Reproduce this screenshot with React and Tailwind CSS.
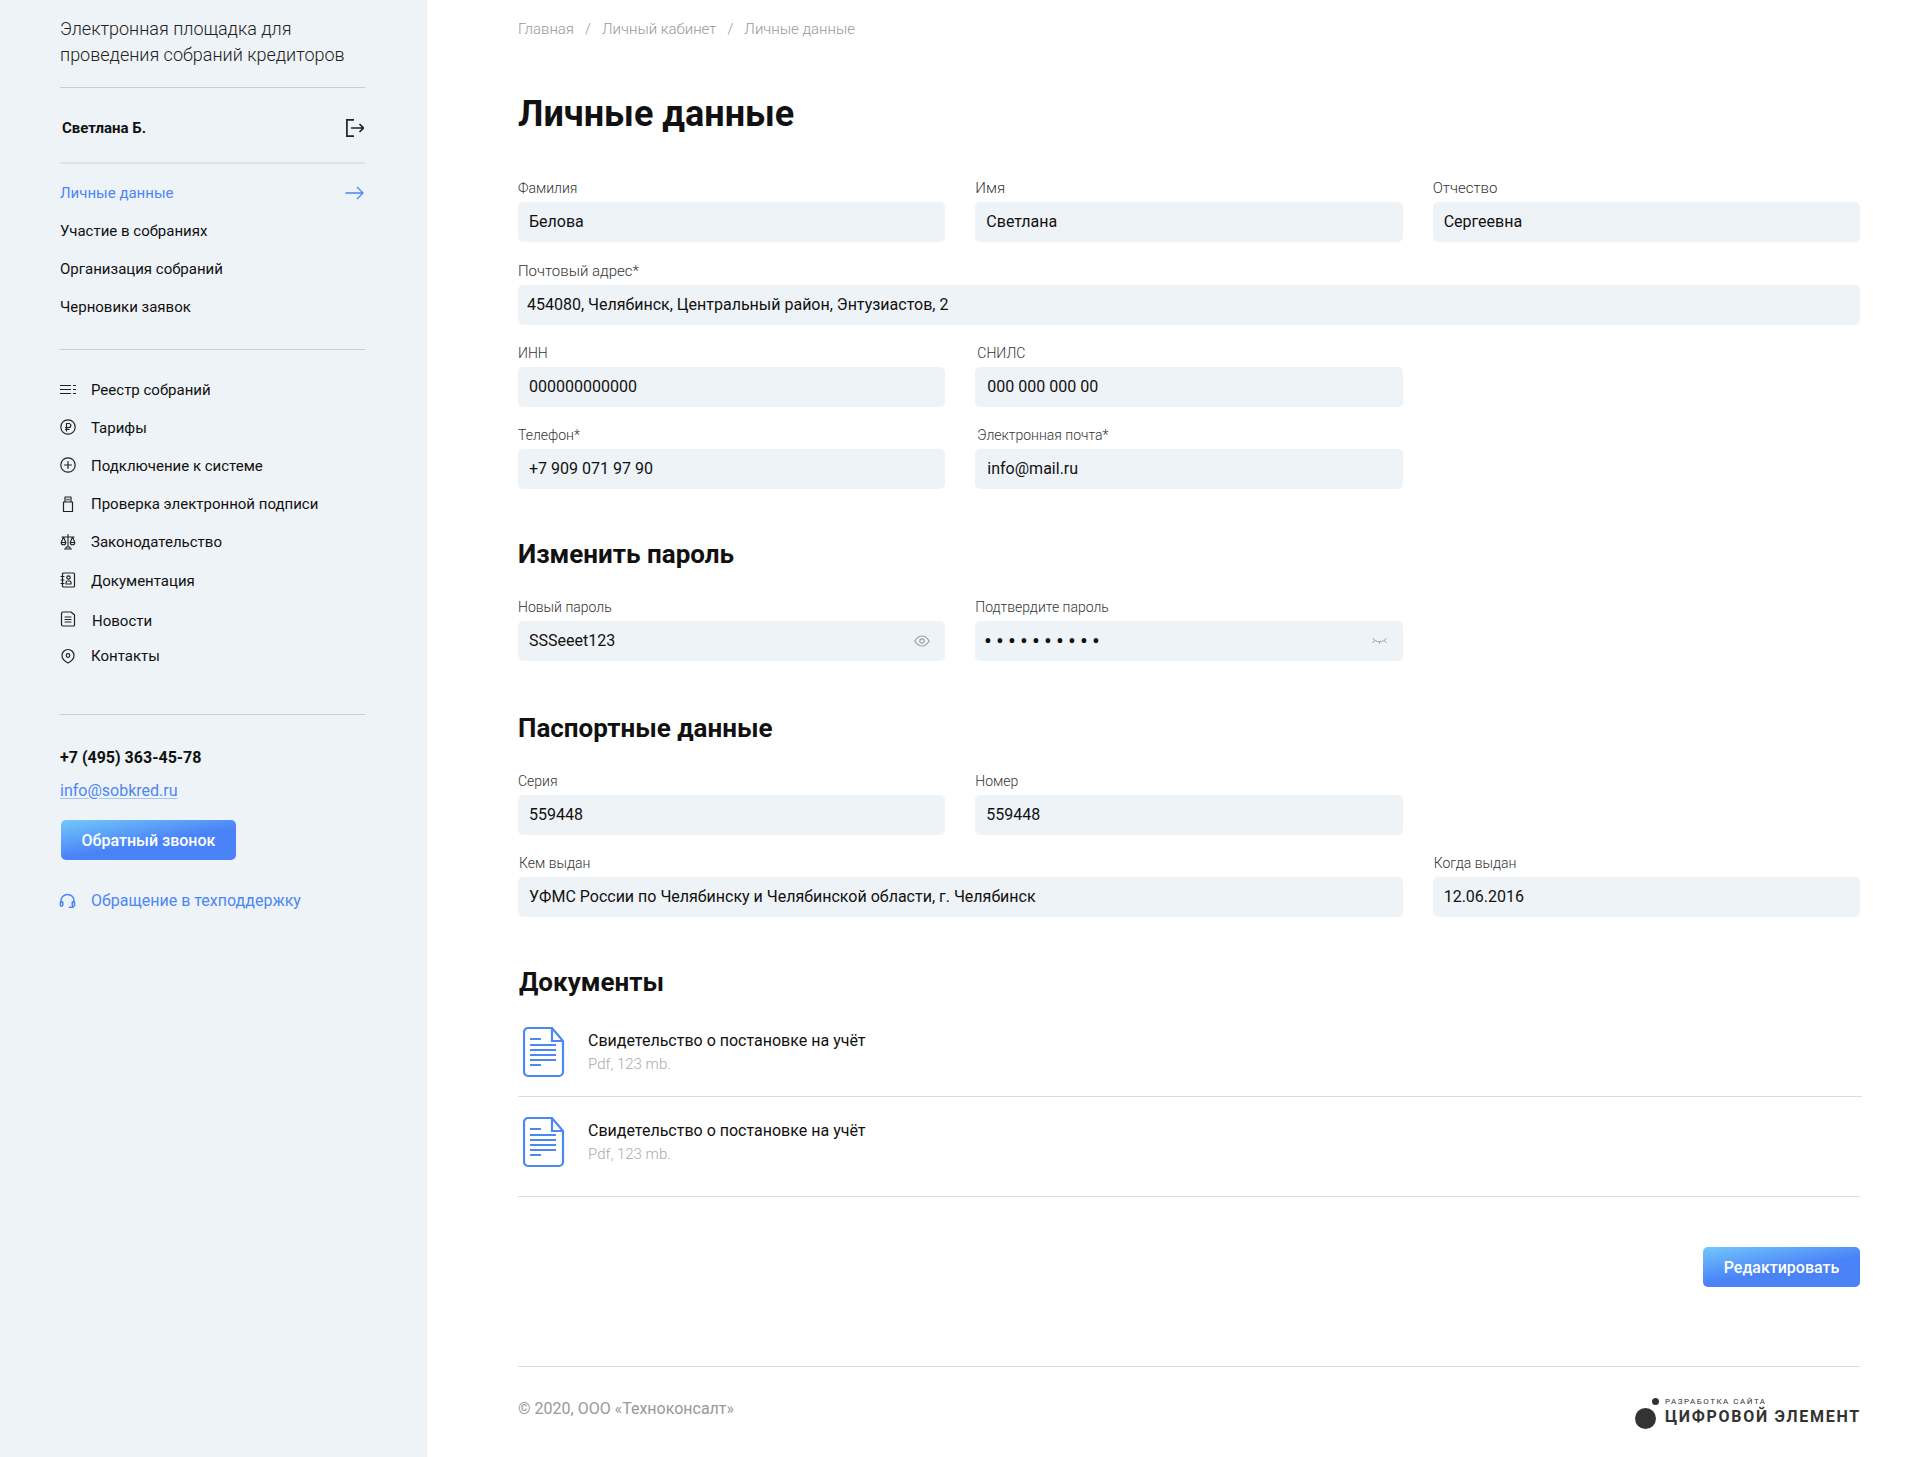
const Label = ({ children, className = "" }) => (
  <div className={`text-[14px] leading-[16px] font-light text-[#333] mb-[6px] ${className}`}>{children}</div>
);

const Field = ({ label, value, className = "", labelClass = "", inputClass = "px-[11px]", right }) => (
  <div className={className}>
    <Label className={labelClass}>{label}</Label>
    <div className={`h-10 rounded-[5px] bg-[#eef3f7] flex items-center justify-between text-[16px] text-[#111] ${inputClass}`}>
      <span>{value}</span>
      {right}
    </div>
  </div>
);

const S = { fill: "none", stroke: "currentColor", strokeWidth: 1.2, strokeLinecap: "round", strokeLinejoin: "round" };

const icons = {
  list: <svg width="16" height="16" viewBox="0 0 16 16" {...S}><path d="M0.500 3.500h10M0.500 7.500h10M0.500 11.500h10M13.500 3.500h2M13.500 7.500h2M13.500 11.500h2" /></svg>,
  ruble: <svg width="16" height="16" viewBox="0 0 16 16" {...S}><circle cx="8" cy="8" r="7.200" /><path d="M6.500 12V4.500h2.300a2 2 0 0 1 0 4H5.500M5.500 10.300h3.500" /></svg>,
  plus: <svg width="16" height="16" viewBox="0 0 16 16" {...S}><circle cx="8" cy="8" r="7.200" /><path d="M8 4.500v7M4.500 8h7" /></svg>,
  usb: <svg width="16" height="16" viewBox="0 0 16 16" {...S}><path d="M5 1h6v5H5zM3.500 6h9v9.500h-9zM7 3v1M9 3v1" /></svg>,
  scales: <svg width="16" height="16" viewBox="0 0 16 16" {...S} strokeWidth="1.100"><path d="M8 0.500v12.500M2 3h12M4.500 15h7M6 13h4v2H6zM3.500 3 1.200 8.500h4.600zM12.500 3l-2.300 5.500h4.600zM1.200 8.500a2.300 2.300 0 0 0 4.600 0M10.200 8.500a2.300 2.300 0 0 0 4.600 0" /></svg>,
  book: <svg width="16" height="16" viewBox="0 0 16 16" {...S}><rect x="2.500" y="1" width="12" height="14" rx="1" /><circle cx="8.500" cy="5.500" r="1.700" /><path d="M6 12h5v-1.500a1.500 1.500 0 0 0-1.500-1.500h-2A1.500 1.500 0 0 0 6 10.500zM1 4.500h3M1 8h3M1 11.500h3" /></svg>,
  doc: <svg width="16" height="16" viewBox="0 0 16 16" {...S}><path d="M1.500 2.500A1.500 1.500 0 0 1 3 1H11l3.500 3v10a1 1 0 0 1-1 1H3A1.500 1.500 0 0 1 1.500 13.500zM5 6h6M5 8.500h6M5 11h6" /></svg>,
  pin: <svg width="16" height="16" viewBox="0 0 16 16" {...S}><path d="M8 15c-3-1.500-6-3.500-6-7.500a6 6 0 0 1 12 0c0 4-3 6-6 7.500z" /><circle cx="8" cy="7.500" r="1.800" /></svg>,
};

const mainMenu = ["Участие в собраниях", "Организация собраний", "Черновики заявок"];

const infoMenu = [
  { icon: "list", text: "Реестр собраний", cls: "h-[38px]", iconCls: "-mt-[1px]" },
  { icon: "ruble", text: "Тарифы", cls: "h-[38px]", iconCls: "-mt-[3px]" },
  { icon: "plus", text: "Подключение к системе", cls: "h-[38px]", iconCls: "-mt-[2px]" },
  { icon: "usb", text: "Проверка электронной подписи", cls: "h-[38px]", iconCls: "-mt-[1px]" },
  { icon: "scales", text: "Законодательство", cls: "h-[38px]" },
  { icon: "book", text: "Документация", cls: "h-[39px]", iconCls: "-mt-[2px]", textCls: "mt-[2px]" },
  { icon: "doc", text: "Новости", cls: "h-[40px]", iconCls: "-mt-[3px]", textCls: "ml-px mt-[3px]" },
  { icon: "pin", text: "Контакты", cls: "h-[32px]" },
];

const Sidebar = () => (
  <aside className="w-[427px] shrink-0 bg-[#eef3f7] pl-[60px] pr-[62px] pt-[16px] text-[#111]">
    <div className="text-[18px] leading-[26px] font-light text-[#222] h-[72px] border-b border-[#c9ced3]">
      Электронная площадка для<br />проведения собраний кредиторов
    </div>
    <div className="h-[76px] border-b-2 border-[#dfe3e8] flex items-center justify-between pl-[2px] pt-[6px]">
      <span className="text-[15px] font-bold mt-px">Светлана Б.</span>
      <svg width="18" height="18" viewBox="0 0 18 18" fill="none" stroke="#222" strokeWidth="1.700" className="mr-px">
        <path d="M8 0.900H0.900v16.200H8M5 9h12.500M13.500 5l4 4-4 4" />
      </svg>
    </div>
    <div className="pt-[10px] pb-[23px] border-b border-[#c9ced3] text-[15px]">
      <div className="h-[38px] flex items-center justify-between text-[#4d86f5]">
        <span>Личные данные</span>
        <svg width="19" height="14" viewBox="0 0 19 14" fill="none" stroke="currentColor" strokeWidth="1.300" className="mr-px">
          <path d="M0.500 7H18M12 1l6 6-6 6" />
        </svg>
      </div>
      {mainMenu.map((t) => (
        <div key={t} className="h-[38px] flex items-center">{t}</div>
      ))}
    </div>
    <div className="pt-[21px] pb-[42px] border-b border-[#c9ced3] text-[15px]">
      {infoMenu.map((m) => (
        <div key={m.text} className={`flex items-center ${m.cls}`}>
          <span className={`w-[31px] text-[#222] ${m.iconCls || ""}`}>{icons[m.icon]}</span>
          <span className={m.textCls}>{m.text}</span>
        </div>
      ))}
    </div>
    <div className="text-[16px] leading-[20px] font-bold mt-[33px]">+7 (495) 363-45-78</div>
    <div className="text-[16px] leading-[20px] mt-[13px] text-[#4d86f5] underline underline-offset-2 decoration-[#a9c4f7]">info@sobkred.ru</div>
    <button className="block mt-[19px] ml-px w-[175px] h-10 pt-[2px] rounded-[5px] text-white text-[16px] font-medium bg-[linear-gradient(170deg,#72c8fa_0%,#4a82f8_55%)]">
      Обратный звонок
    </button>
    <div className="flex items-center mt-[29px] text-[16px] text-[#4d86f5]">
      <span className="w-[31px]">
        <svg width="17" height="16" viewBox="0 0 18 16" fill="none" stroke="currentColor" strokeWidth="1.600" strokeLinecap="round" className="-ml-px">
          <path d="M2 10V8a7 7 0 0 1 14 0v2M1.500 9.500a1.300 1.300 0 0 1 2.500 0v3a1.300 1.300 0 0 1-2.500 0zM14 9.500a1.300 1.300 0 0 1 2.500 0v3a1.300 1.300 0 0 1-2.500 0zM15 14.500h-4" />
        </svg>
      </span>
      <span>Обращение в техподдержку</span>
    </div>
  </aside>
);

const DocRow = ({ className }) => (
  <div className={`flex border-b border-[#dcdcdc] ${className}`}>
    <svg width="42" height="52" viewBox="0 0 42 52" fill="none" stroke="#4d86f5" strokeWidth="2.200" className="ml-[5px] shrink-0">
      <path d="M5 2h24l11 13v31a4 4 0 0 1-4 4H5a4 4 0 0 1-4-4V6a4 4 0 0 1 4-4zM29 2v13h11" />
      <path d="M7 13h11M7 19h26M7 24h26M7 29h26M7 34h26M7 39h11" strokeWidth="1.800" />
    </svg>
    <div className="ml-[23px] mt-[5px]">
      <div className="text-[16px] leading-[20px] text-[#111]">Свидетельство о постановке на учёт</div>
      <div className="text-[15px] leading-[18px] mt-[4px] font-light text-[#aaa]">Pdf, 123 mb.</div>
    </div>
  </div>
);

const H2 = ({ children, className }) => (
  <h2 className={`text-[26px] leading-[30px] font-bold text-[#111] ${className}`}>{children}</h2>
);

export default function App() {
  return (
    <div className="flex w-[1920px] h-[1457px] bg-white overflow-hidden font-['Roboto',sans-serif]">
      <Sidebar />
      <main className="flex-1 pl-[91px] pr-[60px] pt-[20px]">
        <div className="flex text-[15px] leading-[18px] font-light text-[#999]">
          <span>Главная</span>
          <span className="mx-[11px]">/</span>
          <span>Личный кабинет</span>
          <span className="mx-[11px]">/</span>
          <span>Личные данные</span>
        </div>
        <h1 className="text-[36px] leading-[42px] font-bold text-[#111] mt-[55px]">Личные данные</h1>

        <div className="grid grid-cols-3 gap-x-[30px] gap-y-[20px] mt-[45px]">
          <Field label="Фамилия" value="Белова" className="mb-px" />
          <Field label="Имя" value="Светлана" className="mb-px" labelClass="text-[15px]" />
          <Field label="Отчество" value="Сергеевна" className="mb-px" labelClass="text-[15px]" />
          <Field label="Почтовый адрес*" value="454080, Челябинск, Центральный район, Энтузиастов, 2" className="col-span-3" labelClass="text-[15px]" inputClass="px-[9px]" />
          <Field label="ИНН" value="000000000000" />
          <Field label="СНИЛС" value="000 000 000 00" labelClass="ml-[2px]" inputClass="px-[12px]" />
          <div />
          <Field label="Телефон*" value="+7 909 071 97 90" />
          <Field label="Электронная почта*" value="info@mail.ru" labelClass="ml-[2px]" inputClass="px-[12px]" />
        </div>

        <H2 className="mt-[50px]">Изменить пароль</H2>
        <div className="grid grid-cols-3 gap-x-[30px] mt-[30px]">
          <Field
            label="Новый пароль"
            value="SSSeeet123"
            inputClass="pl-[11px] pr-[15px]"
            right={
              <svg width="16" height="12" viewBox="0 0 16 12" fill="none" stroke="#a0a0a0" strokeWidth="1.200">
                <path d="M0.800 6C3 2.500 5.500 1 8 1s5 1.500 7.200 5C13 9.500 10.500 11 8 11S3 9.500 0.800 6z" />
                <circle cx="8" cy="6" r="2.200" />
              </svg>
            }
          />
          <Field
            label="Подтвердите пароль"
            value={<span className="tracking-[4.800px] text-[20px] text-[#111] font-bold">••••••••••</span>}
            inputClass="pl-[9px] pr-[16px]"
            right={
              <svg width="15" height="8" viewBox="0 0 15 8" fill="none" stroke="#a0a0a0" strokeWidth="1">
                <path d="M0.500 1C4 6 11 6 14.500 1M0.500 5.500 3 3.500M14.500 5.500 12 3.500M7.500 4.800v2" />
              </svg>
            }
          />
        </div>

        <H2 className="mt-[52px]">Паспортные данные</H2>
        <div className="grid grid-cols-3 gap-x-[30px] gap-y-[20px] mt-[30px]">
          <Field label="Серия" value="559448" />
          <Field label="Номер" value="559448" />
          <div />
          <Field label="Кем выдан" value="УФМС России по Челябинску и Челябинской области, г. Челябинск" className="col-span-2" labelClass="ml-px" />
          <Field label="Когда выдан" value="12.06.2016" labelClass="ml-px" />
        </div>

        <H2 className="mt-[50px] ml-px">Документы</H2>
        <div className="mt-[29px]">
          <DocRow className="h-[71px] -mr-[2px]" />
          <DocRow className="h-[100px] pt-[19px]" />
        </div>

        <div className="flex justify-end mt-[50px]">
          <button className="w-[157px] h-10 pt-[2px] rounded-[5px] text-white text-[16px] font-medium bg-[linear-gradient(170deg,#72c8fa_0%,#4a82f8_55%)]">
            Редактировать
          </button>
        </div>

        <div className="mt-[79px] border-t border-[#dcdcdc] flex justify-between pt-[27px]">
          <span className="text-[16px] leading-[30px] text-[#999]">© 2020, ООО «Техноконсалт»</span>
          <div className="relative w-[225px] h-[32px] text-[#333]">
            <span className="absolute left-0 top-[14px] w-[21px] h-[21px] rounded-full bg-[#333]" />
            <span className="absolute left-[17px] top-[4px] w-[7px] h-[7px] rounded-full bg-[#333]" />
            <span className="absolute left-[30px] top-[2px] text-[8px] leading-[12px] tracking-[1.500px] whitespace-nowrap">РАЗРАБОТКА САЙТА</span>
            <span className="absolute left-[30px] top-[14px] text-[16px] leading-[18px] font-bold tracking-[1.700px] whitespace-nowrap">ЦИФРОВОЙ ЭЛЕМЕНТ</span>
          </div>
        </div>
      </main>
    </div>
  );
}
